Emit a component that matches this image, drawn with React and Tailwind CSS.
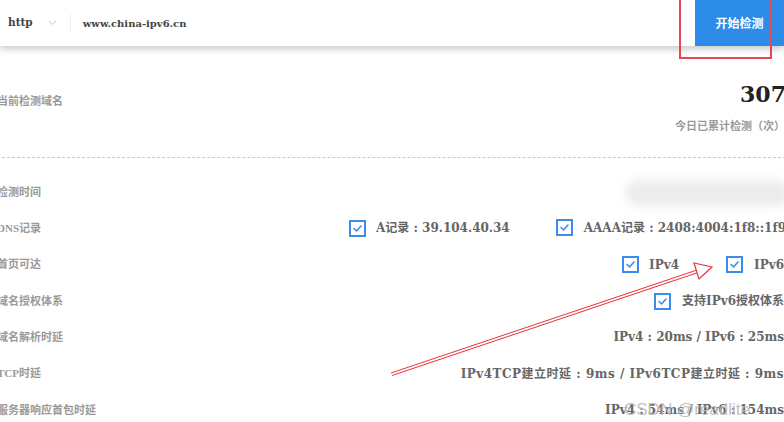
import React from "react";

const FONT = { fontFamily: '"DejaVu Serif", "Noto Sans CJK SC", serif' };
const LABEL_FONT = { fontFamily: '"Liberation Serif", "Noto Sans CJK SC", serif' };

function Check() {
  return (
    <span className="inline-flex h-[17px] w-[17px] shrink-0 items-center justify-center border-2 border-[#3b8cec] bg-white">
      <svg width="11" height="9" viewBox="0 0 11 9" fill="none">
        <path d="M2 4.5 L4.6 7 L9 2" stroke="#3b8cec" strokeWidth="1.6" strokeLinecap="round" strokeLinejoin="round" />
      </svg>
    </span>
  );
}

function Row({ label, children }) {
  return (
    <div className="flex h-[36.3px] items-center justify-between">
      <div className="text-[11px] font-bold text-[#9a9a9a]" style={LABEL_FONT}>{label}</div>
      <div className="flex items-center whitespace-nowrap text-[12px] font-bold text-[#666]">{children}</div>
    </div>
  );
}

export default function App() {
  return (
    <div className="relative h-[422px] w-[784px] overflow-hidden bg-white" style={FONT}>
      {/* header */}
      <div className="relative z-10 flex h-[46px] items-center bg-white shadow-[0_3px_7px_rgba(0,0,0,0.22)]">
        <div className="flex flex-1 items-center pl-[8px]">
          <span className="text-[10.5px] font-bold text-[#444]">http</span>
          <svg className="ml-[15px]" width="9" height="6" viewBox="0 0 9 6" fill="none">
            <path d="M1 1 L4.5 4.5 L8 1" stroke="#c8c8c8" strokeWidth="1" />
          </svg>
          <span className="ml-[13px] h-[18px] w-px bg-[#eeeeee]" />
          <span className="ml-[12px] text-[10px] font-bold text-[#444]">www.china-ipv6.cn</span>
        </div>
        <div className="flex h-full w-[89px] items-center justify-center bg-[#2e8ce9] text-[12px] font-bold text-white" style={{ fontFamily: '"Noto Sans CJK SC", sans-serif' }}>
          开始检测
        </div>
      </div>

      {/* body */}
      <div className="-ml-[3px] mr-[-2px]">
        <div className="flex h-[112px] items-start justify-between border-b border-dashed border-[#c8c8c8]">
          <div className="mt-[47px] text-[11px] font-bold text-[#9a9a9a]" style={LABEL_FONT}>当前检测域名</div>
          <div className="flex flex-col items-end">
            <div className="mt-[34px] text-[22px] font-bold leading-[28px] text-[#222]">307</div>
            <div className="mr-[1px] mt-[10px] text-[11px] font-bold text-[#9a9a9a]" style={LABEL_FONT}>今日已累计检测（次）</div>
          </div>
        </div>

        <div className="pt-[16px]">
          <Row label="检测时间"><span /></Row>
          <Row label="DNS记录">
            <Check />
            <span className="ml-[10px]">A记录 : 39.104.40.34</span>
            <span className="ml-[46px]"><Check /></span>
            <span className="ml-[11px]">AAAA记录 : 2408:4004:1f8::1f9</span>
          </Row>
          <Row label="首页可达">
            <Check />
            <span className="ml-[10px]">IPv4</span>
            <span className="ml-[47px]"><Check /></span>
            <span className="ml-[11px] mr-[2px]">IPv6</span>
          </Row>
          <Row label="域名授权体系">
            <Check />
            <span className="ml-[11px] mr-[2px]">支持IPv6授权体系</span>
          </Row>
          <Row label="域名解析时延">
            <span className="mr-[2px]">IPv4 : 20ms / IPv6 : 25ms</span>
          </Row>
          <Row label="TCP时延">
            <span className="mr-[2px] tracking-[0.5px]">IPv4TCP建立时延 : 9ms / IPv6TCP建立时延 : 9ms</span>
          </Row>
          <Row label="服务器响应首包时延">
            <span className="mr-[2px]">IPv4 : 54ms / IPv6 : 154ms</span>
          </Row>
        </div>
      </div>

      {/* redacted blur */}
      <div className="absolute left-[625px] top-[180px] h-[26px] w-[165px] rounded-full bg-[#ececec] blur-[5px]" />

      {/* red annotation rectangle */}
      <div className="absolute left-[679px] top-[-2px] z-20 h-[61px] w-[93px] border-2 border-[#e8474f]" />

      {/* red arrow */}
      <svg className="absolute left-0 top-0 z-20" width="784" height="422" viewBox="0 0 784 422" fill="none">
        <path d="M391 373 L703 268" stroke="#e8313a" strokeWidth="1" />
        <path d="M392 375.5 L704 270.5" stroke="#e8313a" strokeWidth="1" />
        <path d="M694 263 L712 267 L699 279 Z" stroke="#e8313a" strokeWidth="1.2" fill="white" />
      </svg>

      {/* watermark */}
      <div className="absolute left-[624px] top-[397px] z-20 text-[17px] text-[rgba(185,185,185,0.9)]" style={{ fontFamily: '"Liberation Sans", sans-serif' }}>
        CSDN @readlite
      </div>
    </div>
  );
}
